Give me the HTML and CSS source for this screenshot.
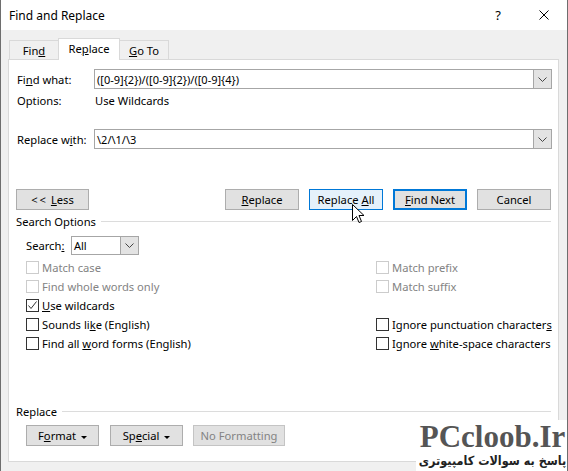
FILE: index.html
```html
<!DOCTYPE html>
<html lang="en">
<head>
    <meta charset="UTF-8">
    <title>Find and Replace</title>
    <link rel="stylesheet" href="styles.css">
</head>
<body>
    <div class="window">
        <div class="titlebar">
            <span class="title">Find and Replace</span>
            <span class="caption-btn help">?</span>
            <span class="caption-btn">
                <svg width="10" height="10" viewBox="0 0 10 10"><path d="M0.5 0.5L9.5 9.5M9.5 0.5L0.5 9.5" stroke="#000" stroke-width="1" fill="none"/></svg>
            </span>
        </div>
        <div class="client">
            <div class="tabs">
                <div class="tab"><span>Fin<u>d</u></span></div>
                <div class="tab active"><span>Re<u>p</u>lace</span></div>
                <div class="tab"><span><u>G</u>o To</span></div>
            </div>
            <div class="panel">
                <div class="field">
                    <span class="field-label">Fi<u>n</u>d what:</span>
                    <div class="combo">
                        <span class="combo-text">([0-9]{2})/([0-9]{2})/([0-9]{4})</span>
                        <span class="combo-btn"><svg width="9" height="5" viewBox="0 0 9 5"><path d="M0.5 0.5L4.5 4.5L8.5 0.5" stroke="#444" fill="none"/></svg></span>
                    </div>
                </div>
                <div class="options-row">
                    <span class="field-label wide">Options:</span>
                    <span>Use Wildcards</span>
                </div>
                <div class="field replace-field">
                    <span class="field-label">Replace w<u>i</u>th:</span>
                    <div class="combo">
                        <span class="combo-text">\2/\1/\3</span>
                        <span class="combo-btn"><svg width="9" height="5" viewBox="0 0 9 5"><path d="M0.5 0.5L4.5 4.5L8.5 0.5" stroke="#444" fill="none"/></svg></span>
                    </div>
                </div>
                <div class="actions">
                    <button class="btn less"><span class="lt">&lt;&lt;</span> <u>L</u>ess</button>
                    <div class="actions-right">
                        <button class="btn"><u>R</u>eplace</button>
                        <button class="btn hover">Replace <u>A</u>ll</button>
                        <button class="btn default"><u>F</u>ind Next</button>
                        <button class="btn">Cancel</button>
                    </div>
                </div>
                <div class="group-head">
                    <span>Search Options</span>
                    <span class="rule"></span>
                </div>
                <div class="search-row">
                    <span class="search-label">Search<u>:</u></span>
                    <div class="select">
                        <span class="select-text">All</span>
                        <span class="combo-btn"><svg width="9" height="5" viewBox="0 0 9 5"><path d="M0.5 0.5L4.5 4.5L8.5 0.5" stroke="#444" fill="none"/></svg></span>
                    </div>
                </div>
                <div class="checks">
                    <div class="check disabled"><span class="box"></span><span>Match case</span></div>
                    <div class="check disabled"><span class="box"></span><span>Match prefix</span></div>
                    <div class="check disabled"><span class="box"></span><span>Find whole words only</span></div>
                    <div class="check disabled"><span class="box"></span><span>Match suffix</span></div>
                    <div class="check"><span class="box"><svg width="11" height="11" viewBox="0 0 11 11"><path d="M1.5 5.5L4 8.5L9.5 1.5" stroke="#333" stroke-width="1" fill="none"/></svg></span><span><u>U</u>se wildcards</span></div>
                    <div class="check empty"></div>
                    <div class="check"><span class="box"></span><span>Sounds li<u>k</u>e (English)</span></div>
                    <div class="check"><span class="box"></span><span>Ignore punctuation character<u>s</u></span></div>
                    <div class="check"><span class="box"></span><span>Find all <u>w</u>ord forms (English)</span></div>
                    <div class="check"><span class="box"></span><span>Ignore <u>w</u>hite-space characters</span></div>
                </div>
                <div class="group-head replace-head">
                    <span>Replace</span>
                    <span class="rule"></span>
                </div>
                <div class="format-row">
                    <button class="btn small">F<u>o</u>rmat <span class="caret"></span></button>
                    <button class="btn small">Sp<u>e</u>cial <span class="caret"></span></button>
                    <button class="btn small off">No Formatting</button>
                </div>
            </div>
        </div>

        <svg class="cursor" width="13" height="20" viewBox="0 0 13 20">
            <path d="M0.5 0.5L0.5 16.5L4.5 12.5L7 18.5L9.5 17.5L7 11.5L12 11.5Z" fill="#fff" stroke="#000" stroke-width="1" stroke-linejoin="round"/>
        </svg>

        <div class="watermark">
            <div class="wm-brand">PCcloob.Ir</div>
            <div class="wm-sub">پاسخ به سوالات کامپیوتری</div>
        </div>
    </div>
</body>
</html>
```

FILE: styles.css
```css
body {
    margin: 0;
    font-family: "Noto Sans", "Open Sans", sans-serif;
    font-size: 11.2px;
    color: #000;
}
.window {
    position: relative;
    width: 568px;
    height: 471px;
    box-sizing: border-box;
    border-left: 1px solid #6e6e6e;
    border-right: 1px solid #6e6e6e;
    background-color: #f0f0f0;
    display: flex;
    flex-direction: column;
    overflow: hidden;
}
.titlebar {
    height: 30px;
    flex: none;
    background-color: #fff;
    display: flex;
    align-items: center;
    padding-left: 8px;
}
.title {
    flex: 1;
    font-size: 12px;
}
.caption-btn {
    width: 46px;
    height: 30px;
    display: flex;
    align-items: center;
    justify-content: center;
}
.help {
    font-size: 13px;
}
.client {
    flex: 1;
    display: flex;
    flex-direction: column;
    padding: 8px 8px 9px 7px;
}
.tabs {
    height: 21px;
    display: flex;
    align-items: flex-end;
    padding-left: 1px;
}
.tab {
    box-sizing: border-box;
    height: 19px;
    width: 50px;
    border: 1px solid #d9d9d9;
    border-bottom: none;
    display: flex;
    align-items: center;
    justify-content: center;
    padding-top: 1px;
}
.tab.active {
    position: relative;
    z-index: 1;
    width: 62px;
    height: 22px;
    margin: 0 -1px -1px;
    background-color: #fff;
    padding-top: 0;
    padding-bottom: 3px;
}
.panel {
    flex: 1;
    background-color: #fff;
    border: 1px solid #d9d9d9;
    padding: 9px 6px 0 8px;
    display: flex;
    flex-direction: column;
}
.field {
    display: flex;
    align-items: center;
    height: 20px;
}
.field-label {
    width: 77px;
    flex: none;
}
.field-label.wide {
    width: 78px;
}
.combo,
.select {
    box-sizing: border-box;
    height: 20px;
    border: 1px solid #a6a6a6;
    display: flex;
    align-items: stretch;
    background-color: #fff;
}
.combo {
    flex: 1;
}
.combo-text,
.select-text {
    flex: 1;
    display: flex;
    align-items: center;
    padding-left: 2px;
    font-size: 11px;
}
.combo-btn {
    width: 17px;
    flex: none;
    background-color: #e3e3e3;
    border-left: 1px solid #a6a6a6;
    display: flex;
    align-items: center;
    justify-content: center;
}
.options-row {
    display: flex;
    align-items: center;
    height: 16px;
    margin-top: 3px;
}
.replace-field {
    margin-top: 21px;
}
.actions {
    display: flex;
    justify-content: space-between;
    margin-top: 40px;
    margin-right: 1px;
}
.actions-right {
    display: flex;
    gap: 10px;
}
.btn {
    box-sizing: border-box;
    width: 74px;
    height: 21px;
    padding: 0;
    border: 1px solid #adadad;
    background-color: #e1e1e1;
    font-family: inherit;
    font-size: 11.2px;
    color: #000;
    text-align: center;
    white-space: nowrap;
}
.btn.less {
    margin-left: -1px;
    width: 73px;
}
.lt {
    letter-spacing: 2px;
}
.btn.hover {
    background-color: #e5f1fb;
    border-color: #0078d7;
}
.btn.default {
    border: 2px solid #0078d7;
}
.group-head {
    display: flex;
    align-items: center;
    height: 14px;
    margin-top: 4px;
    margin-left: -1px;
    margin-right: 1px;
}
.rule {
    flex: 1;
    height: 1px;
    background-color: #dcdcdc;
    margin-left: 5px;
}
.search-row {
    display: flex;
    align-items: center;
    margin-top: 8px;
    padding-left: 9px;
}
.search-label {
    width: 45px;
}
.select {
    width: 68px;
    height: 19px;
}
.checks {
    display: grid;
    grid-template-columns: 350px 1fr;
    grid-auto-rows: 19px;
    margin-top: 3px;
    padding-left: 9px;
}
.check {
    display: flex;
    align-items: center;
    white-space: nowrap;
}
.box {
    box-sizing: border-box;
    width: 13px;
    height: 13px;
    flex: none;
    border: 1px solid #333;
    margin-right: 3px;
    display: flex;
    align-items: center;
    justify-content: center;
}
.check.disabled {
    color: #838383;
}
.check.disabled .box {
    border-color: #cccccc;
}
.replace-head {
    margin-top: 51px;
}
.format-row {
    display: flex;
    margin-top: 7px;
    padding-left: 9px;
}
.btn.small {
    width: 73px;
    margin-right: 11px;
}
.btn.off {
    width: 92px;
    margin-left: -1px;
    color: #838383;
    border-color: #c4c4c4;
}
.caret {
    display: inline-block;
    vertical-align: middle;
    width: 0;
    height: 0;
    margin-left: 2px;
    border-left: 3px solid transparent;
    border-right: 3px solid transparent;
    border-top: 3px solid #000;
}
.cursor {
    position: absolute;
    left: 351px;
    top: 204px;
}
.watermark {
    position: absolute;
    left: 415px;
    top: 420px;
    width: 153px;
    height: 51px;
    background-color: #fff;
    text-align: center;
    overflow: hidden;
}
.wm-brand {
    font-family: "Liberation Serif", serif;
    font-weight: bold;
    font-size: 31px;
    line-height: 33px;
    color: #555;
}
.wm-sub {
    direction: rtl;
    font-family: "DejaVu Sans Condensed", "DejaVu Sans", sans-serif;
    font-weight: bold;
    font-size: 12.5px;
    line-height: 16px;
    color: #222;
    white-space: nowrap;
}
```
